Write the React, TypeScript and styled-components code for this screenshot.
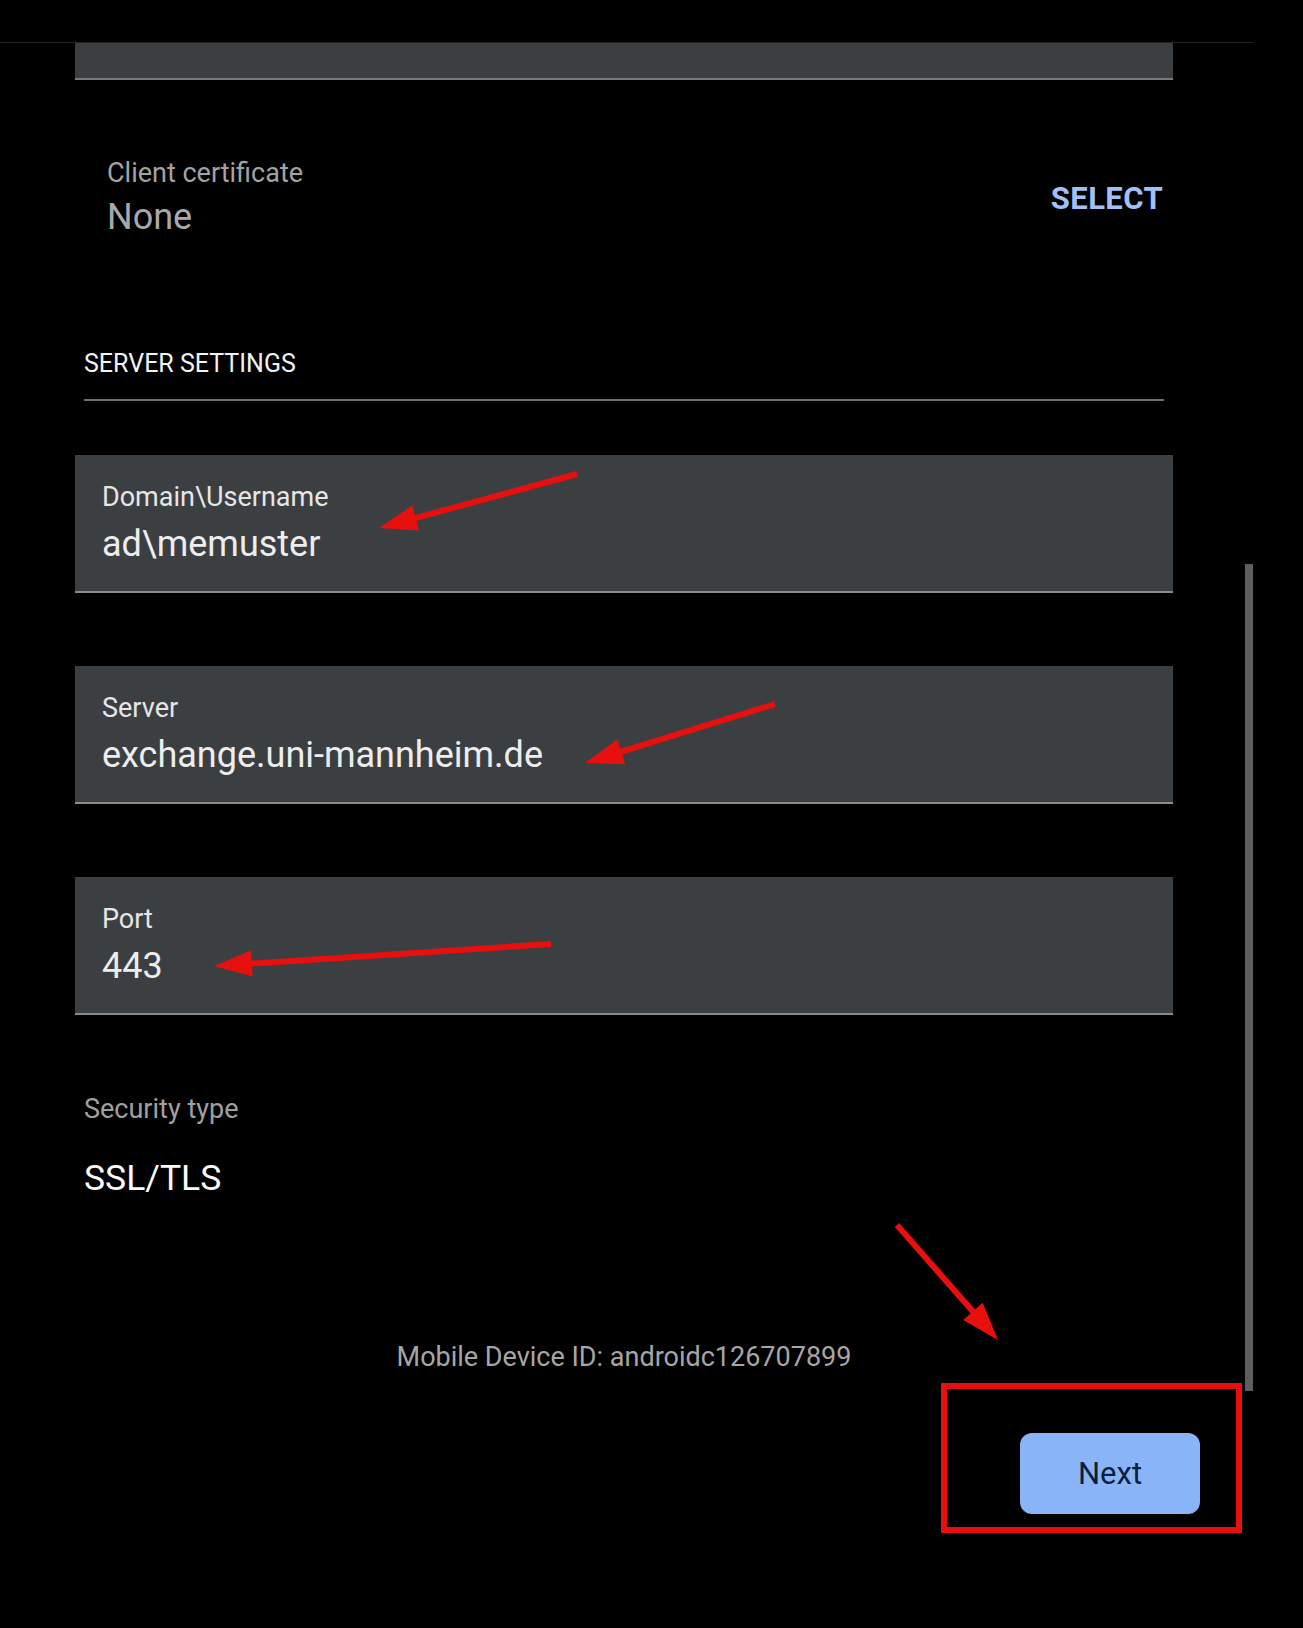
import React from "react";
import styled, { createGlobalStyle } from "styled-components";

const GlobalStyle = createGlobalStyle`
  html, body {
    margin: 0;
    padding: 0;
    background: #000;
  }
  body {
    font-family: Roboto, "Noto Sans", "Liberation Sans", sans-serif;
  }
`;

const Page = styled.div`
  position: relative;
  width: 1303px;
  height: 1628px;
  background: #000;
  overflow: hidden;
  display: flex;
  flex-direction: column;
`;

const TopBar = styled.div`
  width: 1253px;
  height: 42px;
  border-bottom: 1px solid #262626;
  flex-shrink: 0;
`;

const Content = styled.div`
  width: 1098px;
  margin-left: 75px;
  display: flex;
  flex-direction: column;
`;

const TopField = styled.div`
  height: 35px;
  background: #3c3f42;
  border-bottom: 2px solid #7a7a7a;
`;

const CertRow = styled.div`
  margin-top: 78px;
  padding: 0 10px 0 32px;
  display: flex;
  align-items: center;
  justify-content: space-between;
`;

const CertText = styled.div`
  display: flex;
  flex-direction: column;
  gap: 8px;
`;

const CertLabel = styled.span`
  font-size: 27px;
  line-height: 30px;
  color: #a3a3a3;
`;

const CertValue = styled.span`
  font-size: 36px;
  line-height: 42px;
  color: #a9a9a9;
`;

const SelectButton = styled.span`
  font-size: 31px;
  font-weight: 700;
  letter-spacing: 0.4px;
  color: #a3c0f5;
`;

const SectionTitle = styled.div`
  margin: 112px 9px 0;
  padding-bottom: 21px;
  border-bottom: 2px solid #6e6e6e;
  font-size: 25px;
  line-height: 28px;
  color: #f2f2f2;
`;

const FieldBox = styled.div<{ $first?: boolean }>`
  margin-top: ${(p) => (p.$first ? "54px" : "73px")};
  background: #3c3f42;
  border-bottom: 2px solid #8a8a8a;
  padding: 27px 27px 26px;
  display: flex;
  flex-direction: column;
  gap: 11px;
`;

const FieldLabel = styled.span`
  font-size: 27px;
  line-height: 30px;
  color: #e6e6e6;
`;

const FieldValue = styled.span`
  font-size: 36px;
  line-height: 42px;
  color: #ededed;
`;

const PlainLabel = styled.div`
  margin: 79px 9px 0;
  font-size: 27px;
  line-height: 30px;
  color: #a0a0a0;
`;

const PlainValue = styled.div`
  margin: 33px 9px 0;
  font-size: 35.5px;
  line-height: 42px;
  color: #fafafa;
`;

const DeviceId = styled.div`
  margin-top: 143px;
  text-align: center;
  font-size: 27px;
  line-height: 30px;
  color: #a6a6a6;
`;

const Footer = styled.div`
  margin-top: 61px;
  padding-right: 103px;
  display: flex;
  justify-content: flex-end;
`;

const NextButton = styled.button`
  width: 180px;
  height: 81px;
  border: none;
  border-radius: 12px;
  background: #8ab4f8;
  color: #0b1e3f;
  font-family: Roboto, "Liberation Sans", sans-serif;
  font-size: 31px;
`;

const ScrollThumb = styled.div`
  position: absolute;
  left: 1245px;
  top: 564px;
  width: 8px;
  height: 827px;
  background: #5e5e5e;
`;

const Annotations = styled.svg`
  position: absolute;
  left: 0;
  top: 0;
  pointer-events: none;
`;

type ArrowProps = { x1: number; y1: number; x2: number; y2: number };

const Arrow = ({ x1, y1, x2, y2 }: ArrowProps) => {
  const dx = x2 - x1;
  const dy = y2 - y1;
  const len = Math.hypot(dx, dy);
  const ux = dx / len;
  const uy = dy / len;
  const headLen = 38;
  const headHalf = 13;
  const bx = x2 - ux * headLen;
  const by = y2 - uy * headLen;
  const px = -uy * headHalf;
  const py = ux * headHalf;
  const points = `${x2},${y2} ${bx + px},${by + py} ${bx - px},${by - py}`;
  return (
    <g>
      <line
        x1={x1}
        y1={y1}
        x2={bx + ux * 4}
        y2={by + uy * 4}
        stroke="#e80f0f"
        strokeWidth={6}
      />
      <polygon points={points} fill="#e80f0f" />
    </g>
  );
};

const fields = [
  { label: "Domain\\Username", value: "ad\\memuster" },
  { label: "Server", value: "exchange.uni-mannheim.de" },
  { label: "Port", value: "443" },
];

const App = () => {
  return (
    <>
      <GlobalStyle />
      <Page>
        <TopBar />
        <Content>
          <TopField />
          <CertRow>
            <CertText>
              <CertLabel>Client certificate</CertLabel>
              <CertValue>None</CertValue>
            </CertText>
            <SelectButton>SELECT</SelectButton>
          </CertRow>
          <SectionTitle>SERVER SETTINGS</SectionTitle>
          {fields.map((f, i) => (
            <FieldBox key={f.label} $first={i === 0}>
              <FieldLabel>{f.label}</FieldLabel>
              <FieldValue>{f.value}</FieldValue>
            </FieldBox>
          ))}
          <PlainLabel>Security type</PlainLabel>
          <PlainValue>SSL/TLS</PlainValue>
          <DeviceId>Mobile Device ID: androidc126707899</DeviceId>
        </Content>
        <Footer>
          <NextButton>Next</NextButton>
        </Footer>
        <ScrollThumb />
        <Annotations width={1303} height={1628} viewBox="0 0 1303 1628">
          <Arrow x1={577} y1={474} x2={379} y2={528} />
          <Arrow x1={775} y1={704} x2={585} y2={763} />
          <Arrow x1={551} y1={944} x2={214} y2={966} />
          <Arrow x1={897} y1={1225} x2={998} y2={1340} />
          <rect
            x={944}
            y={1386}
            width={295}
            height={144}
            fill="none"
            stroke="#e80f0f"
            strokeWidth={6}
          />
        </Annotations>
      </Page>
    </>
  );
};

export default App;
